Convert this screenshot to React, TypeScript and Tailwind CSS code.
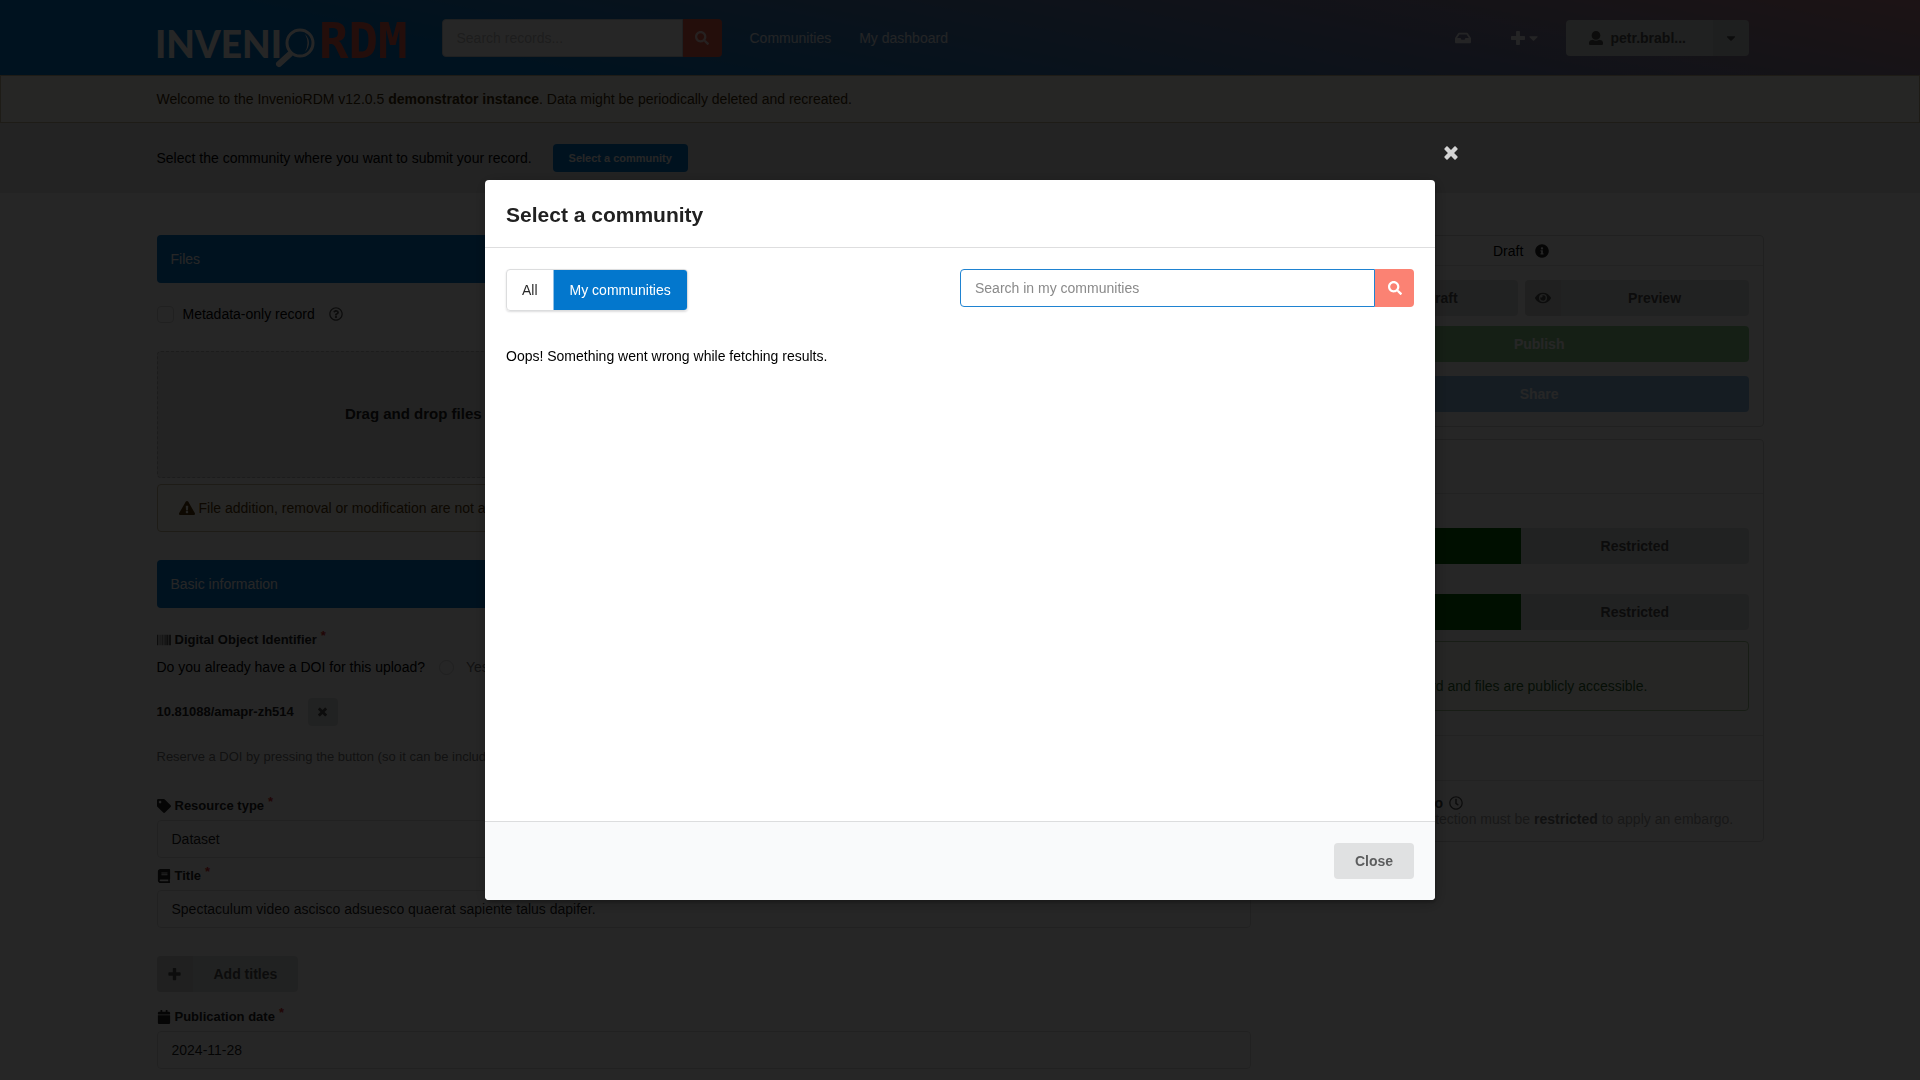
import type { ReactNode } from "react";
import {
  FaBarcode,
  FaBook,
  FaCalendar,
  FaCaretDown,
  FaExclamationTriangle,
  FaEye,
  FaInbox,
  FaInfoCircle,
  FaLockOpen,
  FaRegClock,
  FaRegQuestionCircle,
  FaSave,
  FaSearch,
  FaShareSquare,
  FaTag,
  FaUpload,
} from "react-icons/fa";

type IconProps = { className?: string };

const CloseIcon = ({ className }: IconProps) => (
  <svg viewBox="0 0 384 512" fill="currentColor" className={className} aria-hidden="true">
    <path d="M323.1 441l53.9-53.9c9.4-9.4 9.4-24.5 0-33.9L279.8 256l97.2-97.2c9.4-9.4 9.4-24.5 0-33.9L323.1 71c-9.4-9.4-24.5-9.4-33.9 0L192 168.2 94.8 71c-9.4-9.4-24.5-9.4-33.9 0L7 124.9c-9.4 9.4-9.4 24.5 0 33.9l97.2 97.2L7 353.2c-9.4 9.4-9.4 24.5 0 33.9L60.9 441c9.4 9.4 24.5 9.4 33.9 0l97.2-97.2 97.2 97.2c9.3 9.3 24.5 9.3 33.9 0z" />
  </svg>
);

const UserIcon = ({ className }: IconProps) => (
  <svg viewBox="0 0 512 512" fill="currentColor" className={className} aria-hidden="true">
    <path d="M256 0c88.366 0 160 71.634 160 160s-71.634 160-160 160S96 248.366 96 160 167.634 0 256 0zm183.283 333.821l-71.313-17.828c-74.923 53.89-165.738 41.864-223.94 0l-71.313 17.828C29.981 344.505 0 382.903 0 426.955V464c0 26.51 21.49 48 48 48h416c26.51 0 48-21.49 48-48v-37.045c0-44.052-29.981-82.45-72.717-93.134z" />
  </svg>
);

const PlusIcon = ({ className }: IconProps) => (
  <svg viewBox="0 0 448 512" fill="currentColor" className={className} aria-hidden="true">
    <path d="M448 294.2v-76.4c0-13.3-10.7-24-24-24H286.2V56c0-13.3-10.7-24-24-24h-76.4c-13.3 0-24 10.7-24 24v137.8H24c-13.3 0-24 10.7-24 24v76.4c0 13.3 10.7 24 24 24h137.8V456c0 13.3 10.7 24 24 24h76.4c13.3 0 24-10.7 24-24V318.2H424c13.3 0 24-10.7 24-24z" />
  </svg>
);

function Logo() {
  return (
    <a href="#home" aria-label="InvenioRDM" className="block">
      <svg width="252" height="60" viewBox="0 0 252 60" className="overflow-visible" aria-hidden="true">
        <text x="-2" y="50" fill="#ffffff" className="font-['Lato'] text-[37px] font-black">
          INVENI
        </text>
        <circle cx="143" cy="35" r="13" fill="none" stroke="#ffffff" strokeWidth="3" />
        <path d="M148 26 q5 9 0 18 q8 -9 0 -18z" fill="#ffffff" />
        <path d="M133 46 L122 56" stroke="#ffffff" strokeWidth="6" strokeLinecap="round" />
        <text x="162" y="50" fill="#f0604c" className="font-['DejaVu_Sans_Mono'] text-[49px] font-bold">
          RDM
        </text>
      </svg>
    </a>
  );
}

function Header() {
  return (
    <header className="h-[75px] bg-[linear-gradient(12deg,#0377cd_25%,#fb8273_125%)] px-8">
      <div className="mx-auto flex h-full w-full max-w-[1607px] items-center">
        <Logo />
        <form className="ml-[33px] flex h-[38px] w-[280px]" onSubmit={(e) => e.preventDefault()}>
          <input
            type="search"
            aria-label="Search records"
            placeholder="Search records..."
            className="min-w-0 flex-1 rounded-l border border-gray-300 bg-white px-3.5 text-sm placeholder:text-[#bfbfbf]"
          />
          <button type="submit" aria-label="Search" className="flex w-[39px] items-center justify-center rounded-r bg-[#f2604e] text-white/80">
            <FaSearch className="size-3.5" />
          </button>
        </form>
        <nav className="ml-7 flex gap-7 text-sm text-white/90">
          <a href="#communities">Communities</a>
          <a href="#dashboard">My dashboard</a>
        </nav>
        <div className="ml-auto mr-[15px] flex items-center text-white/90">
          <a href="#requests" aria-label="Requests">
            <FaInbox className="size-4" />
          </a>
          <button type="button" aria-label="Create" className="ml-10 flex items-center gap-1">
            <PlusIcon className="h-4 w-3.5" />
            <FaCaretDown className="h-3.5 w-[9px]" />
          </button>
          <div className="ml-7 flex h-9">
            <button type="button" className="flex w-[147px] items-center gap-2 rounded-l bg-[#d5dcd9] pl-[23px] text-sm font-bold text-neutral-600">
              <UserIcon className="size-3.5" />
              petr.brabl...
            </button>
            <button type="button" aria-label="Account menu" className="flex w-9 items-center justify-center rounded-r bg-[#cbcecd] text-neutral-600">
              <FaCaretDown className="size-3.5" />
            </button>
          </div>
        </div>
      </div>
    </header>
  );
}

function SectionTitle({ children }: { children: ReactNode }) {
  return <h2 className="flex h-12 items-center rounded bg-[#0377cd] px-3.5 text-sm text-white">{children}</h2>;
}

function FieldLabel({ icon, htmlFor, children }: { icon: ReactNode; htmlFor?: string; children: ReactNode }) {
  return (
    <label htmlFor={htmlFor} className="flex h-5 items-center gap-1 text-[13px] font-bold text-[#212121]">
      <span className="flex w-3.5 justify-center text-sm">{icon}</span>
      {children}
      <span className="self-start text-[13px] leading-3 text-[#db2828]">*</span>
    </label>
  );
}

const field = "h-[38px] w-full appearance-none rounded border border-[#dedede] bg-transparent px-3.5 text-sm text-black/90";

function DepositForm() {
  return (
    <div className="min-w-0 flex-[1095]">
      <SectionTitle>Files</SectionTitle>
      <div className="mt-5 flex h-[22px] items-center text-sm">
        <input id="metadata" type="checkbox" className="size-[17px] appearance-none rounded-sm border border-[#d4d4d5]" />
        <label htmlFor="metadata" className="ml-[9px]">
          Metadata-only record
        </label>
        <FaRegQuestionCircle className="ml-3.5 size-3.5 text-neutral-600" />
      </div>
      <div className="mt-[26px] flex h-[127px] items-center justify-center gap-8 rounded border border-dashed border-[#bdbdbd] bg-[#ebebeb]">
        <span className="text-[15px] font-bold text-[#212121]">Drag and drop files</span>
        <span className="text-sm">or</span>
        <button type="button" className="flex h-9 items-center gap-3 rounded bg-[#0377cd] px-5 text-sm font-bold text-white">
          <FaUpload />
          Upload files
        </button>
        <span className="w-[327px]" />
      </div>
      <p className="mt-1.5 flex h-12 items-center gap-1 rounded border border-[#c9ba9b] bg-[#fffaf3] px-[21px] text-sm text-[#573a08]">
        <FaExclamationTriangle className="size-4" />
        File addition, removal or modification are not allowed after you have published your upload.
      </p>

      <div className="mt-7">
        <SectionTitle>Basic information</SectionTitle>
      </div>
      <div className="mt-[22px]">
        <FieldLabel icon={<FaBarcode />}>Digital Object Identifier</FieldLabel>
      </div>
      <div role="radiogroup" aria-label="Existing DOI" className="mt-[7px] flex h-5 items-center text-sm">
        <span>Do you already have a DOI for this upload?</span>
        <label className="ml-3.5 flex items-center gap-3 text-neutral-500">
          <input type="radio" name="doi" className="size-[15px] appearance-none rounded-full border border-[#d4d4d5]" />
          Yes
        </label>
        <label className="ml-3.5 flex items-center gap-3">
          <input type="radio" name="doi" defaultChecked className="size-[15px]" />
          No
        </label>
      </div>
      <div className="mt-[21px] flex h-7 items-center gap-3.5 text-[13px] font-bold text-[#212121]">
        10.81088/amapr-zh514
        <button type="button" aria-label="Discard DOI" className="flex h-7 w-[30px] items-center justify-center rounded bg-[#dfe3e1] text-neutral-600">
          <CloseIcon className="h-3 w-[9px]" />
        </button>
      </div>
      <p className="mt-[21px] h-5 text-[13px] leading-5 text-neutral-500">
        Reserve a DOI by pressing the button (so it can be included in files prior to upload).
      </p>

      <div className="mt-[29px]">
        <FieldLabel icon={<FaTag />} htmlFor="resource">
          Resource type
        </FieldLabel>
      </div>
      <select id="resource" className={`mt-1 block ${field}`}>
        <option>Dataset</option>
      </select>
      <div className="mt-2">
        <FieldLabel icon={<FaBook />} htmlFor="title">
          Title
        </FieldLabel>
      </div>
      <input id="title" className={`mt-1 block ${field}`} defaultValue="Spectaculum video ascisco adsuesco quaerat sapiente talus dapifer." />
      <button type="button" className="mt-7 flex h-9 items-center overflow-hidden rounded bg-[#dfe3e1] text-sm font-bold text-neutral-600">
        <span className="flex h-full w-9 items-center justify-center bg-[#d4d6d5]">
          <PlusIcon className="h-3.5 w-[13px]" />
        </span>
        <span className="px-[21px]">Add titles</span>
      </button>
      <div className="mt-[15px]">
        <FieldLabel icon={<FaCalendar />} htmlFor="date">
          Publication date
        </FieldLabel>
      </div>
      <input id="date" className={`mt-1 block ${field}`} defaultValue="2024-11-28" />
    </div>
  );
}

function IconButton({ icon, label, className }: { icon: ReactNode; label: string; className: string }) {
  return (
    <button type="button" className={`flex h-9 w-full items-center overflow-hidden rounded text-sm font-bold ${className}`}>
      <span className="flex h-full w-9 items-center justify-center bg-black/5">{icon}</span>
      <span className="flex-1 text-center">{label}</span>
    </button>
  );
}

function AccessToggle({ label }: { label: string }) {
  return (
    <div className="text-sm">
      <div className="flex h-[30px] items-center text-[13px] font-bold">{label}</div>
      <div className="flex h-9 overflow-hidden rounded font-bold">
        <button type="button" className="flex-1 bg-[#006400] text-white">
          Public
        </button>
        <button type="button" className="flex-1 bg-[#dfe3e1] text-neutral-600">
          Restricted
        </button>
      </div>
    </div>
  );
}

function Sidebar() {
  return (
    <aside className="min-w-0 flex-[485] text-sm">
      <div className="rounded border border-[#d4d4d5]">
        <div className="flex h-[30px] items-center justify-center border-b border-[#e3e3e3]">
          Draft
          <FaInfoCircle className="ml-3 size-3.5 text-[#212121]" />
        </div>
        <div className="p-3.5">
          <div className="grid grid-cols-2 gap-[7px]">
            <IconButton icon={<FaSave />} label="Save draft" className="bg-[#dfe3e1] text-neutral-600" />
            <IconButton icon={<FaEye className="size-4" />} label="Preview" className="bg-[#dfe3e1] text-neutral-600" />
          </div>
          <div className="mt-2.5">
            <IconButton icon={<FaUpload />} label="Publish" className="bg-[#90cf90] text-white" />
          </div>
          <div className="mt-3.5">
            <IconButton icon={<FaShareSquare />} label="Share" className="bg-[#8dbce0] text-white" />
          </div>
        </div>
      </div>

      <div className="mt-3 rounded border border-[#d4d4d5]">
        <h2 className="flex h-[54px] items-center border-b border-[#e3e3e3] px-3.5 text-lg font-bold">Visibility</h2>
        <div className="px-3.5 pt-1">
          <AccessToggle label="Full record" />
          <AccessToggle label="Files only" />
          <div className="mt-[11px] flex h-[70px] items-center gap-5 rounded border border-[#a3c293] bg-[#fcfff5] px-5 text-[#2c662d]">
            <FaLockOpen className="h-10 w-[41px]" />
            <div className="flex flex-col leading-5">
              <strong>Public</strong>
              <span>The record and files are publicly accessible.</span>
            </div>
          </div>
        </div>
        <h2 className="mt-6 flex h-[46px] items-center border-y border-[#e3e3e3] px-3.5 text-lg font-bold">Options</h2>
        <div className="py-3.5 pl-[41px] pr-3.5 text-neutral-400">
          <div className="flex h-4 items-center gap-1.5 font-bold text-neutral-700">
            Apply an embargo
            <FaRegClock className="size-3.5 text-neutral-600" />
          </div>
          <p className="whitespace-nowrap leading-4">
            Record or files protection must be <strong className="text-neutral-500">restricted</strong> to apply an embargo.
          </p>
        </div>
      </div>
    </aside>
  );
}

function CommunityModal() {
  return (
    <div className="fixed inset-0 flex items-center justify-center bg-black/85">
      <div
        role="dialog"
        aria-modal="true"
        aria-labelledby="modal-title"
        className="relative w-[950px] max-w-full rounded bg-white shadow-[1px_3px_3px_0_rgba(0,0,0,0.2),1px_3px_15px_2px_rgba(0,0,0,0.2)]"
      >
        <button type="button" aria-label="Close dialog" className="absolute -right-[23px] -top-9 text-white/80">
          <CloseIcon className="h-[18px] w-3.5" />
        </button>
        <h1 id="modal-title" className="flex h-[68px] items-center border-b border-[#dededf] px-[21px] pt-[3px] text-[21px] font-bold text-[#212121]">
          Select a community
        </h1>
        <div className="h-[573px] p-[21px]">
          <div className="flex items-start justify-between">
            <div className="flex h-[42px] rounded border border-[#dcddde] text-sm shadow-[0_1px_2px_0_rgba(34,36,38,0.15)]">
              <button type="button" className="px-[15px] text-black/85">
                All
              </button>
              <button type="button" className="rounded-r-[3px] border-l border-[#8fc0e6] bg-[#0377cd] px-4 text-white">
                My communities
              </button>
            </div>
            <form className="flex h-[38px] w-1/2" onSubmit={(e) => e.preventDefault()}>
              <input
                type="search"
                aria-label="Search in my communities"
                placeholder="Search in my communities"
                className="min-w-0 flex-1 rounded-l border border-[#1f83d1] px-3.5 text-sm outline-none placeholder:text-[#8a8a8a]"
              />
              <button type="submit" aria-label="Search communities" className="flex w-[39px] items-center justify-center rounded-r bg-[#fb8273] text-white">
                <FaSearch className="size-3.5" />
              </button>
            </form>
          </div>
          <p className="mt-[35px] text-sm">Oops! Something went wrong while fetching results.</p>
        </div>
        <div className="flex justify-end rounded-b border-t border-[#dcddde] bg-[#f9fafb] p-[21px]">
          <button type="button" className="h-9 w-20 rounded bg-[#e0e1e2] text-sm font-bold text-[#5c5d5e]">
            Close
          </button>
        </div>
      </div>
    </div>
  );
}

export default function App() {
  return (
    <div className="h-screen overflow-hidden bg-white font-['Liberation_Sans',Arial,sans-serif] text-black">
      <Header />
      <div className="border border-[#c9ba9b] bg-[#fffaf3] px-8 text-sm text-[#3f2e0a]">
        <p className="mx-auto flex h-[46px] w-full max-w-[1607px] items-center whitespace-pre">
          Welcome to the InvenioRDM v12.0.5 <strong>demonstrator instance</strong>. Data might be periodically deleted and recreated.
        </p>
      </div>
      <div className="bg-[#e9e9e9] px-8">
        <div className="mx-auto flex h-[70px] w-full max-w-[1607px] items-center gap-[21px] text-sm">
          Select the community where you want to submit your record.
          <button type="button" className="h-7 rounded bg-[#0377cd] px-4 pt-px text-[11px] font-bold text-white">
            Select a community
          </button>
        </div>
      </div>
      <main className="px-8 pt-[42px]">
        <div className="mx-auto flex w-full max-w-[1607px] items-start gap-7">
          <DepositForm />
          <Sidebar />
        </div>
      </main>
      <CommunityModal />
    </div>
  );
}
